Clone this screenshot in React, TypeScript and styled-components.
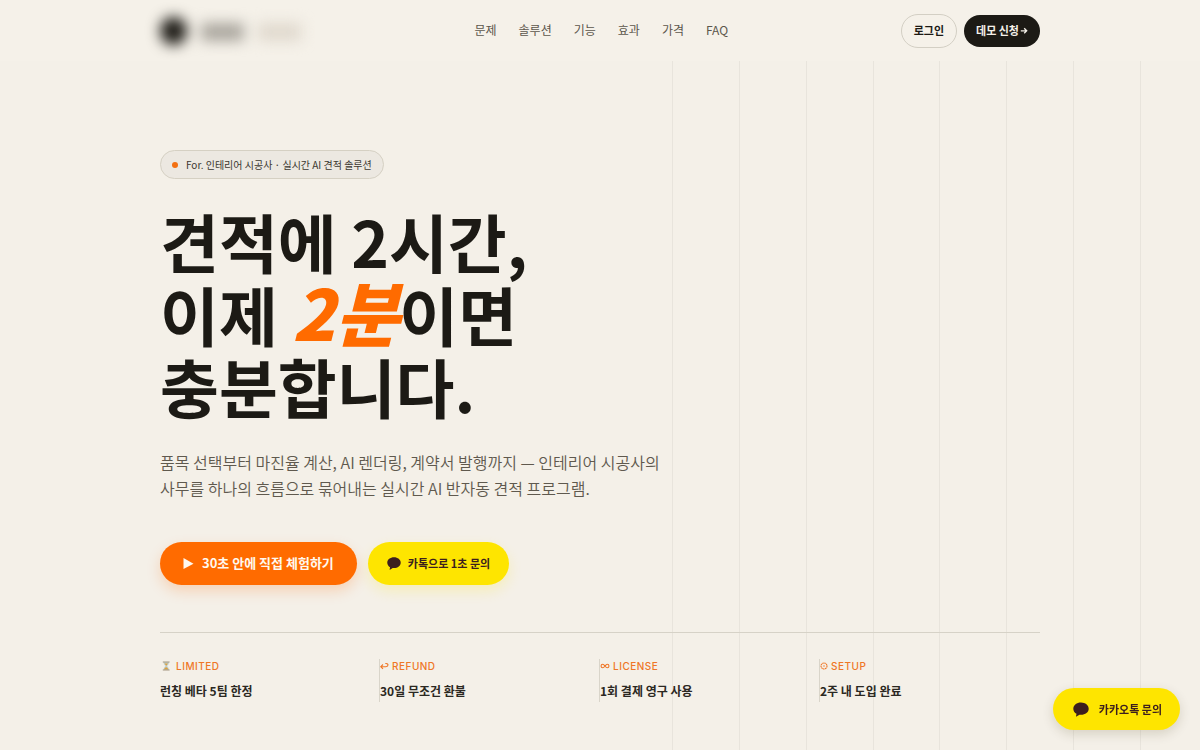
import React from "react";
import styled, { createGlobalStyle } from "styled-components";

const GlobalStyle = createGlobalStyle`
  * { box-sizing: border-box; }
  body {
    margin: 0;
    background: #f4f0e8;
    color: #1c1a15;
    font-family: "Noto Sans CJK KR", sans-serif;
    overflow-x: hidden;
  }
  h1, p, dl, dd { margin: 0; }
`;

const Page = styled.div`
  position: relative;
  min-height: 100vh;
`;

const Header = styled.header`
  position: sticky;
  top: 0;
  z-index: 2;
  background: #f5f1e9;
`;

const Container = styled.div`
  max-width: 928px;
  margin: 0 auto;
  padding: 0 24px;
`;

const HeaderRow = styled(Container)`
  display: flex;
  align-items: center;
  justify-content: space-between;
  height: 61px;
`;

const Brand = styled.a`
  display: flex;
  align-items: center;
  gap: 14px;
  width: 142px;
  filter: blur(7px);
`;

const BrandMark = styled.span`
  width: 27px;
  height: 28px;
  border-radius: 50%;
  background: #1c1a15;
`;

const BrandBar = styled.span<{ $tone: string }>`
  width: 43px;
  height: 18px;
  margin-top: 2px;
  background: ${(p) => p.$tone};
`;

const Nav = styled.nav`
  display: flex;
  gap: 22px;
`;

const NavLink = styled.a`
  color: #5c574c;
  font-size: 12px;
  line-height: 18px;
  padding-bottom: 2px;
  text-decoration: none;
`;

const Actions = styled.div`
  display: flex;
  align-items: center;
  gap: 7px;
`;

const SmallButton = styled.button<{ $dark?: boolean }>`
  height: ${(p) => (p.$dark ? 32 : 34)}px;
  padding: 0 12px 2px;
  border: ${(p) => (p.$dark ? "0" : "1px solid #d3cfc4")};
  border-radius: 17px;
  background: ${(p) => (p.$dark ? "#1c1a15" : "transparent")};
  color: ${(p) => (p.$dark ? "#f5f1e9" : "#1c1a15")};
  display: inline-flex;
  align-items: center;
  gap: 1px;
  font: 700 11px/16px "Noto Sans CJK KR", sans-serif;
`;

const GridLines = styled.div`
  position: absolute;
  top: 0;
  right: 0;
  bottom: 0;
  width: 44%;
  display: grid;
  grid-template-columns: repeat(7, 10fr) 9fr;
  pointer-events: none;
`;

const GridLine = styled.span`
  border-left: 1px solid #e8e4dc;
`;

const Hero = styled.main`
  position: relative;
  padding: 89px 0 48px;
`;

const Badge = styled.div`
  display: inline-flex;
  align-items: center;
  gap: 8px;
  height: 29px;
  padding: 0 11px;
  border: 1px solid #d5d0c3;
  border-radius: 15px;
  background: #ece8e1;
  color: #3b372f;
  font-size: 10px;
  line-height: 16px;
  vertical-align: top;
`;

const Dot = styled.span`
  width: 6px;
  height: 6px;
  border-radius: 50%;
  background: #f37012;
`;

const Title = styled.h1`
  margin-top: 25px;
  font-size: 64px;
  line-height: 72px;
  font-weight: 700;
  white-space: nowrap;

  em {
    color: #ff6b00;
    font-size: 70px;
    line-height: 1;
    font-weight: 900;
  }
`;

const Lead = styled.p`
  margin-top: 28px;
  color: #5f594e;
  font-size: 16px;
  line-height: 26px;
  font-weight: 350;
`;

const CtaRow = styled.div`
  display: flex;
  flex-wrap: wrap;
  gap: 11px;
  margin-top: 41px;
`;

const Cta = styled.button<{ $kakao?: boolean }>`
  display: inline-flex;
  align-items: center;
  gap: ${(p) => (p.$kakao ? 7 : 8)}px;
  height: 43px;
  padding: 0 ${(p) => (p.$kakao ? 19 : 23)}px 1px;
  border: 0;
  border-radius: 22px;
  background: ${(p) => (p.$kakao ? "#fee500" : "#ff6b00")};
  color: ${(p) => (p.$kakao ? "#3c1e1e" : "#fff8ee")};
  font: 700 ${(p) => (p.$kakao ? 11 : 13)}px/20px "Noto Sans CJK KR", sans-serif;
  box-shadow: 0 6px 14px ${(p) => (p.$kakao ? "rgba(254, 229, 0, 0.2)" : "rgba(255, 107, 0, 0.22)")};
`;

const FloatingChat = styled(Cta)`
  position: fixed;
  right: 20px;
  bottom: 20px;
  z-index: 3;
  gap: 10px;
  height: 42px;
  padding: 0 18px 1px 20px;
  box-shadow: 0 4px 12px rgba(60, 50, 0, 0.16);
`;

const Facts = styled.dl`
  display: grid;
  grid-template-columns: repeat(4, 1fr);
  margin-top: 47px;
  padding-top: 26px;
  border-top: 1px solid #d6d2c7;
`;

const Fact = styled.div`
  height: 43px;

  & + & {
    margin-left: -1px;
    border-left: 1px solid #d9d5ca;
  }
`;

const FactLabel = styled.dt`
  display: flex;
  align-items: center;
  gap: 3px;
  color: #ef7626;
  font: 500 10px/14px Inter, sans-serif;
  letter-spacing: 0.05em;
`;

const FactValue = styled.dd`
  margin-top: 9px;
  color: #2b2822;
  font-size: 12px;
  line-height: 18px;
  font-weight: 700;
`;

const Bubble = ({ size }: { size: number }) => (
  <svg width={size} height={size} viewBox="0 0 16 16" fill="#3c1e1e" aria-hidden="true">
    <path d="M8 1.500C3.700 1.500.3 4.200.3 7.700c0 2.200 1.300 4 3.200 5.100l-.5 2.500c-.1.300.2.400.4.300l3.100-1.900 1.500.1c4.300 0 7.700-2.700 7.700-6.100S12.300 1.500 8 1.500z" />
  </svg>
);

const Arrow = () => (
  <svg width="8" height="8" viewBox="0 0 8 8" fill="none" stroke="currentColor" strokeWidth="1.300" aria-hidden="true">
    <path d="M.8 4.800h5.800M4.200 2.300l2.500 2.500-2.500 2.500" />
  </svg>
);

const Play = () => (
  <svg width="11" height="12" viewBox="0 0 11 12" fill="currentColor" aria-hidden="true">
    <path d="M.5 1 10.500 6.700.5 12z" />
  </svg>
);

const Hourglass = () => (
  <svg width="13" height="10" viewBox="0 0 13 10" aria-hidden="true">
    <path d="M3.500 1h5.500c0 2-1 3-2 4 1 1 2 2 2 4H3.500c0-2 1-3 2-4-1-1-2-2-2-4z" fill="#bfd0cc" />
    <path d="M4.500 2.500h3.500L6.300 4.700zM4 8.600c.4-1.600 1.300-2 2.200-2.400.9.400 1.700.8 2.200 2.400z" fill="#dfa13f" />
    <path d="M2.800 1h6.800M2.800 9h6.800" stroke="#a39680" strokeWidth="1" />
  </svg>
);

const Return = () => (
  <svg width="9" height="8" viewBox="0 0 9 8" fill="none" stroke="currentColor" strokeWidth="1.100" aria-hidden="true">
    <path d="M3 2.500.8 4.700 3 6.900M.9 4.700h5.100c2.600 0 2.600-3.200.2-3.200H5.300" />
  </svg>
);

const Infinite = () => (
  <svg width="10" height="8" viewBox="0 0 9 8" fill="none" stroke="currentColor" strokeWidth="1.100" aria-hidden="true">
    <path d="M4.500 4C3.400 2.500 2.800 2.200 2.200 2.200c-2.200 0-2.200 3.600 0 3.600.6 0 1.200-.3 2.300-1.800 1.100-1.500 1.700-1.800 2.300-1.800 2.200 0 2.200 3.600 0 3.600-.6 0-1.200-.3-2.300-1.800z" />
  </svg>
);

const Gear = () => (
  <svg width="8" height="8" viewBox="0 0 8 8" fill="none" stroke="currentColor" aria-hidden="true">
    <circle cx="4" cy="4" r="3" strokeWidth="1.100" strokeDasharray="1.600 .4" />
    <circle cx="4" cy="4" r=".5" strokeWidth=".6" />
  </svg>
);

const links = [
  ["문제", "#problem"],
  ["솔루션", "#solution"],
  ["기능", "#features"],
  ["효과", "#results"],
  ["가격", "#pricing"],
  ["FAQ", "#faq"],
];

const facts = [
  { icon: <Hourglass />, label: "LIMITED", value: "런칭 베타 5팀 한정" },
  { icon: <Return />, label: "REFUND", value: "30일 무조건 환불" },
  { icon: <Infinite />, label: "LICENSE", value: "1회 결제 영구 사용" },
  { icon: <Gear />, label: "SETUP", value: "2주 내 도입 완료" },
];

export default function App() {
  return (
    <Page>
      <GlobalStyle />
      <GridLines>
        {Array.from({ length: 8 }, (_, i) => (
          <GridLine key={i} />
        ))}
      </GridLines>
      <Header>
        <HeaderRow>
          <Brand href="#top">
            <BrandMark />
            <BrandBar $tone="#aaa69e" />
            <BrandBar $tone="#e0d9ce" />
          </Brand>
          <Nav>
            {links.map(([text, href]) => (
              <NavLink key={href} href={href}>
                {text}
              </NavLink>
            ))}
          </Nav>
          <Actions>
            <SmallButton type="button">로그인</SmallButton>
            <SmallButton type="button" $dark>
              데모 신청 <Arrow />
            </SmallButton>
          </Actions>
        </HeaderRow>
      </Header>
      <Hero>
        <Container>
          <Badge>
            <Dot />
            For. 인테리어 시공사 · 실시간 AI 견적 솔루션
          </Badge>
          <Title>
            견적에 2시간,
            <br />
            이제 <em>2분</em>이면
            <br />
            충분합니다.
          </Title>
          <Lead>
            품목 선택부터 마진율 계산, AI 렌더링, 계약서 발행까지 — 인테리어 시공사의
            <br />
            사무를 하나의 흐름으로 묶어내는 실시간 AI 반자동 견적 프로그램.
          </Lead>
          <CtaRow>
            <Cta type="button">
              <Play />
              30초 안에 직접 체험하기
            </Cta>
            <Cta type="button" $kakao>
              <Bubble size={14} />
              카톡으로 1초 문의
            </Cta>
          </CtaRow>
          <Facts>
            {facts.map((f) => (
              <Fact key={f.label}>
                <FactLabel>
                  {f.icon}
                  {f.label}
                </FactLabel>
                <FactValue>{f.value}</FactValue>
              </Fact>
            ))}
          </Facts>
        </Container>
      </Hero>
      <FloatingChat type="button" $kakao>
        <Bubble size={16} />
        카카오톡 문의
      </FloatingChat>
    </Page>
  );
}
